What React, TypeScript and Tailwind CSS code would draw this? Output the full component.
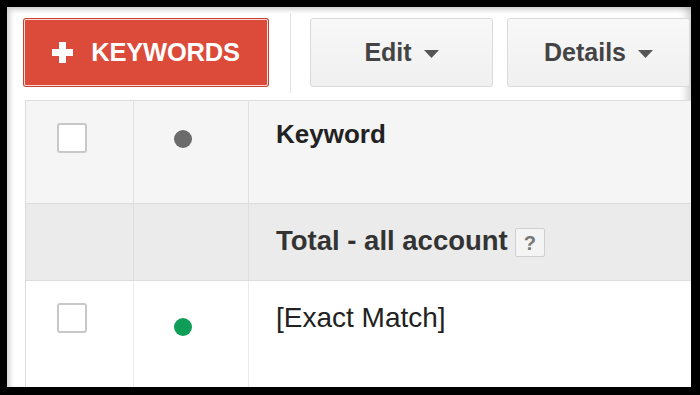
import React from "react";

function Caret() {
  return (
    <svg width="15" height="8" viewBox="0 0 15 8" className="ml-[12px] mt-[2px]">
      <path d="M0 0 L15 0 L7.5 8 Z" fill="#555" />
    </svg>
  );
}

function MenuButton({ label, left }: { label: string; left?: string }) {
  return (
    <div
      className={
        "flex h-[69px] w-[183px] shrink-0 items-center justify-center rounded-[3px] border border-[#dadada] bg-gradient-to-b from-[#f8f8f8] to-[#f0f0f0] " +
        (left ?? "")
      }
    >
      <span className="text-[25px] font-bold text-[#444]">{label}</span>
      <Caret />
    </div>
  );
}

function Checkbox() {
  return <div className="h-[30px] w-[30px] rounded-[3px] border-2 border-[#c8c8c8] bg-white" />;
}

export default function App() {
  return (
    <div
      className="h-[395px] w-[700px] bg-black pt-[7px] pl-[7px] pr-[9px] pb-[8px]"
      style={{ fontFamily: '"Liberation Sans", Arial, sans-serif' }}
    >
      <div className="relative h-full w-full overflow-hidden bg-white shadow-[inset_5px_5px_5px_-2px_rgba(0,0,0,0.18),inset_-9px_0_8px_-5px_rgba(0,0,0,0.2)]">
        {/* toolbar */}
        <div className="flex h-[93px] items-start pt-[11px] pl-[16px]">
          <div className="h-[69px] w-[246px] shrink-0 rounded-[3px] bg-[#c9412f] p-[1px]">
            <div className="flex h-full w-full items-center justify-center rounded-[2px] border border-white/80 bg-[#dc4b3a]">
              <svg width="21" height="21" viewBox="0 0 21 21" className="mr-[18px]">
                <rect x="7" y="0" width="7" height="21" fill="#fff" />
                <rect x="0" y="7" width="21" height="7" fill="#fff" />
              </svg>
              <span className="text-[25.5px] font-bold tracking-[-0.2px] text-white">KEYWORDS</span>
            </div>
          </div>
          <div className="ml-[21px] mt-[-5px] h-[80px] w-[2px] shrink-0 border-l border-[#e3e3e3] bg-white" />
          <MenuButton label="Edit" left="ml-[18px]" />
          <MenuButton label="Details" left="ml-[14px]" />
        </div>

        {/* table */}
        <div className="ml-[18px] border-l border-t border-[#dcdcdc]">
          <div className="flex h-[103px] border-b border-[#dcdcdc] bg-[#f5f5f5]">
            <div className="w-[108px] shrink-0 border-r border-[#e0e0e0] pl-[31px] pt-[22px]">
              <Checkbox />
            </div>
            <div className="w-[115px] shrink-0 border-r border-[#e0e0e0] pl-[40px] pt-[29px]">
              <div className="h-[18px] w-[18px] rounded-full bg-[#6b6b6b]" />
            </div>
            <div className="pl-[27px] pt-[17px] text-[26px] leading-[32px] font-bold text-[#222]">Keyword</div>
          </div>
          <div className="flex h-[77px] border-b border-[#dcdcdc] bg-[#ebebeb]">
            <div className="w-[108px] shrink-0 border-r border-[#dedede]" />
            <div className="w-[115px] shrink-0 border-r border-[#dedede]" />
            <div className="flex items-center pl-[27px] pb-[3px]">
              <span className="text-[27.5px] leading-[32px] font-bold text-[#333]">Total - all account</span>
              <span className="ml-[7px] mt-[4px] flex h-[29px] w-[30px] items-center justify-center rounded-[2px] border border-[#cfcfcf] bg-[#f4f4f4] text-[20px] font-bold text-[#777]">
                ?
              </span>
            </div>
          </div>
          <div className="flex h-[110px] bg-white">
            <div className="w-[108px] shrink-0 border-r border-[#ebebeb] pl-[31px] pt-[22px]">
              <Checkbox />
            </div>
            <div className="w-[115px] shrink-0 border-r border-[#ebebeb] pl-[40px] pt-[37px]">
              <div className="h-[18px] w-[18px] rounded-full bg-[#0f9d58]" />
            </div>
            <div className="pl-[27px] pt-[21px] text-[28px] leading-[32px] text-[#222]">[Exact Match]</div>
          </div>
        </div>
      </div>
    </div>
  );
}
